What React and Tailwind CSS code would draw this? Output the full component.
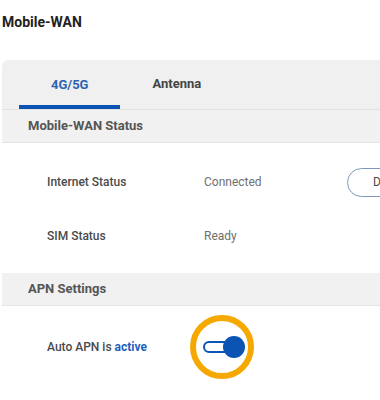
import React from "react";

const rows = [
  { label: "Internet Status", value: "Connected", action: "Disconnect" },
  { label: "SIM Status", value: "Ready" },
];

function SectionHeader({ children }) {
  return (
    <div className="h-[33px] flex items-center pl-[26px] bg-[#f1f1f1] border-b border-[#e4e4e4] text-[13px] font-bold text-[#555]">
      {children}
    </div>
  );
}

function InfoRow({ label, value, action }) {
  return (
    <div className="h-[54px] flex items-center text-[12px]">
      <div className="w-[202px] shrink-0 pl-[45px] text-[#4a4a4a] font-medium">{label}</div>
      <div className="w-[143px] shrink-0 text-[#6f6f6f]">{value}</div>
      {action && (
        <button className="h-[29px] px-[25px] rounded-full border border-[#7f98bb] text-[#4a4a4a] text-[12px] whitespace-nowrap">
          {action}
        </button>
      )}
    </div>
  );
}

export default function App() {
  return (
    <div
      className="w-[380px] h-[400px] overflow-hidden bg-white"
      style={{ fontFamily: "Roboto, 'Liberation Sans', sans-serif" }}
    >
      <h1 className="pt-[12px] pl-[2px] h-[60px] text-[14px] font-bold text-[#222]">Mobile-WAN</h1>

      <div className="ml-[2px] w-[460px] rounded-tl-[6px] overflow-hidden">
        {/* tabs */}
        <div className="h-[50px] bg-[#f0f0f0] flex pl-[17px] border-b border-[#e2e2e2]">
          <div className="px-8 flex items-center text-[13px] font-bold text-[#2f63b3] border-b-[4px] border-[#0b54b4] pt-[4px]">
            4G/5G
          </div>
          <div className="px-8 flex items-center text-[13px] font-bold text-[#444] pb-[1px]">
            Antenna
          </div>
        </div>

        <SectionHeader>Mobile-WAN Status</SectionHeader>
        <div className="bg-white pt-[12px] pb-[10px]">
          {rows.map((r) => (
            <InfoRow key={r.label} {...r} />
          ))}
        </div>

        <SectionHeader>APN Settings</SectionHeader>
        <div className="bg-white h-[82px] flex items-center text-[12px]">
          <div className="w-[201px] shrink-0 pl-[45px] text-[#4a4a4a] font-medium">
            Auto APN is <span className="text-[#1f5fbf] font-bold">active</span>
          </div>
          <div className="relative w-[42px] h-[22px] flex items-center">
            <div className="w-[34px] h-[12px] rounded-full border-2 border-[#0b54b4] bg-white" />
            <div className="absolute right-0 top-0 w-[22px] h-[22px] rounded-full bg-[#0b54b4]" />
            <div className="absolute left-[-13px] top-[-21px] w-[64px] h-[64px] rounded-full border-[6px] border-[#f5a800]" />
          </div>
        </div>
      </div>
    </div>
  );
}
